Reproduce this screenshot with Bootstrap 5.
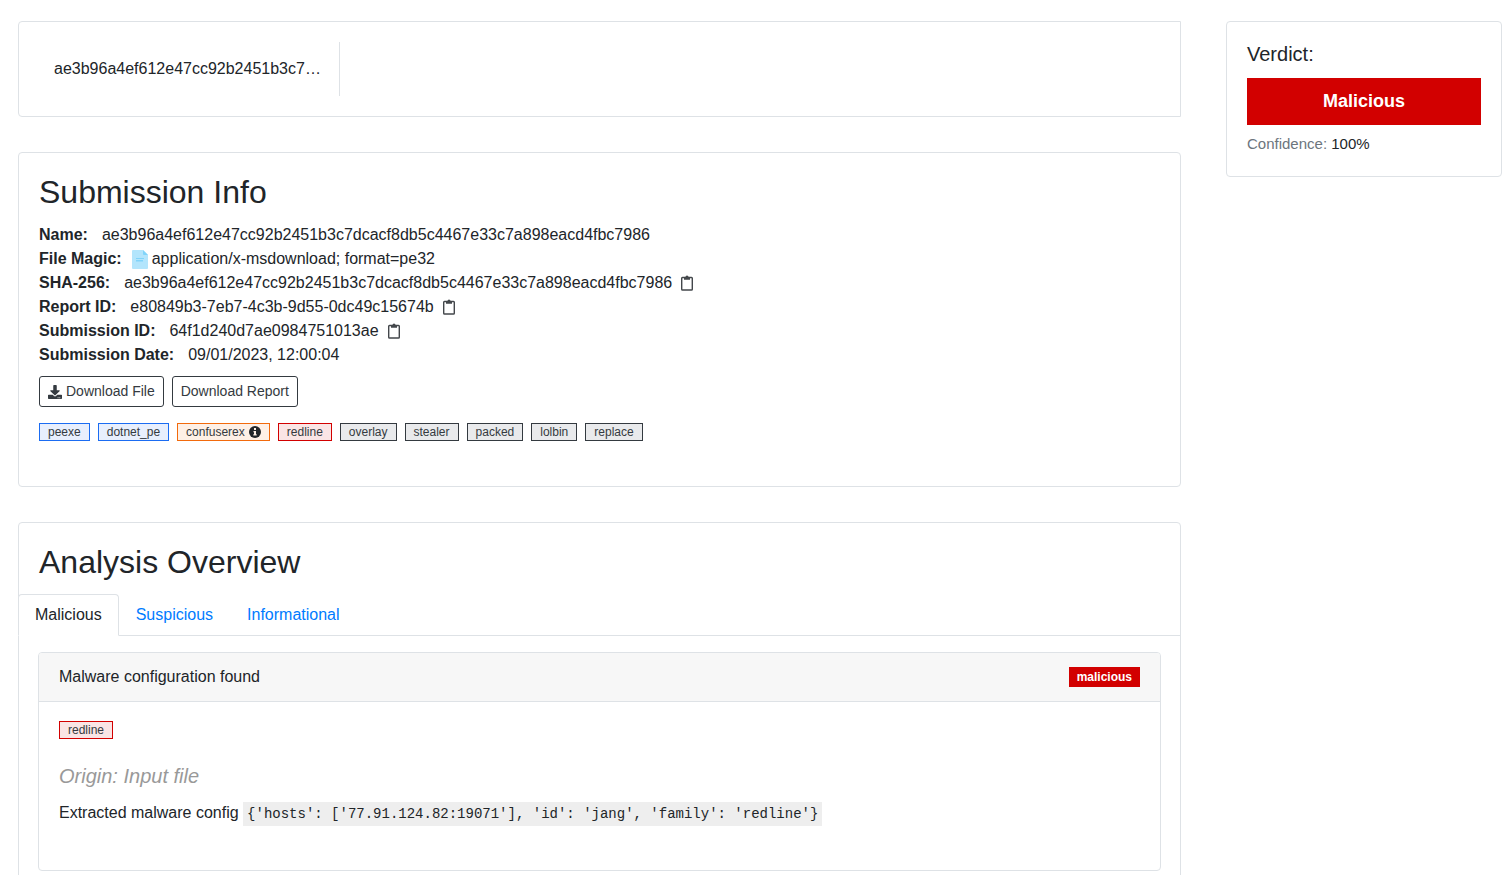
<!DOCTYPE html>
<html lang="en">
<head>
<meta charset="utf-8">
<meta name="viewport" content="width=device-width, initial-scale=1">
<title>Submission report</title>
<link href="https://cdn.jsdelivr.net/npm/bootstrap@5.3.0/dist/css/bootstrap.min.css" rel="stylesheet">
<style>
  body { font-family: "Liberation Sans", Arial, sans-serif; color: #212529; background: #fff; }
  .report-layout { display: grid; gap: 45px; padding: 21px 6px 20px 18px; }
  @media (min-width: 992px) {
    .report-layout { grid-template-columns: minmax(0, 1fr) 276px; align-items: start; }
  }
  .report-main { display: grid; gap: 35px; min-width: 0; }
  .card { --bs-card-border-color: #dee2e6; --bs-card-border-radius: 4px; --bs-card-inner-border-radius: 3px;
    --bs-card-spacer-x: 20px; --bs-card-spacer-y: 20px; --bs-card-cap-padding-x: 20px; --bs-card-cap-padding-y: 12px;
    --bs-card-cap-bg: #f7f7f7; --bs-card-color: #212529; }
  .file-strip { border-radius: 4px 0 0 4px; }
  .file-name { width: 301px; padding: 15px 18px 15px 15px; border-right: 1px solid #dee2e6; }
  h2 { font-size: 32px; line-height: 38px; font-weight: 400; margin-bottom: 12px; }
  .verdict-title { font-size: 20px; line-height: 24px; margin-bottom: 12px; }
  .verdict-box { background: #d20000; color: #fff; font-size: 18px; line-height: 27px; padding: 10px; font-weight: 700; text-align: center; }
  .confidence { font-size: 15px; line-height: 22px; margin: 8px 0 0; padding-bottom: 1px; }
  .confidence span { color: #6c757d; }
  .facts dt, .facts dd { margin: 0; line-height: 24px; }
  .facts dd { overflow-wrap: anywhere; min-width: 0; }
  .fact-gap { gap: 14px; }
  .magic-row { gap: 10px; }
  .copy-btn { border: 0; background: none; padding: 0; margin-left: 9px; line-height: 1; vertical-align: -3px; }
  .copy-btn svg, .file-icon { display: block; }
  .btn-outline-dark { --bs-btn-color: #343a40; --bs-btn-border-color: #343a40; --bs-btn-padding-x: 8px; --bs-btn-padding-y: 4px;
    --bs-btn-font-size: 14px; --bs-btn-line-height: 21px; --bs-btn-border-radius: 3px; }
  .actions { margin-top: 9px; }
  .tag-list { margin: 16px 0 45px; }
  .tag { display: inline-flex; align-items: center; gap: 4px; height: 18px; padding: 0 8px; border: 1px solid #343a40;
    background: #e9eaec; color: #343a40; font-size: 12px; line-height: 16px; }
  .tag-blue { border-color: #1b6cf2; background: #e8effd; }
  .tag-orange { border-color: #f26a0c; background: #fef0e6; }
  .tag-red { border-color: #d20000; background: #fae5e5; }
  .overview-head { padding-bottom: 1px; }
  .nav-tabs { --bs-nav-tabs-border-color: #dee2e6; --bs-nav-tabs-border-radius: 4px; --bs-nav-tabs-link-active-color: #212529;
    --bs-nav-link-color: #007bff; --bs-nav-link-padding-x: 16px; margin-left: -1px; }
  .overview-panes { padding: 16px 19px 19px; }
  .finding .card-body { padding-top: 19px; }
  .severity { background: #d20000; color: #fff; font-size: 12px; line-height: 20px; font-weight: 700; padding: 0 8px; }
  .origin { font-size: 20px; line-height: 24px; font-style: italic; font-weight: 400; color: #999; margin: 25px 0 13px; }
  .config { font-family: "Liberation Mono", monospace; font-size: 14px; line-height: 24px; color: #212529; background: #eee; padding: 4px; }
</style>
</head>
<body>
<svg width="0" height="0" class="position-absolute" aria-hidden="true">
  <symbol id="clipboard" viewBox="0 0 12 16">
    <path d="M1.500 2.500h9a.8.8 0 0 1 .8.8v10.900a.8.8 0 0 1-.8.8h-9a.8.8 0 0 1-.8-.8V3.300a.8.8 0 0 1 .8-.8z" fill="none" stroke="#43474b" stroke-width="1.4"/>
    <path d="M3 2h1.500a1.500 1.500 0 0 1 3 0H9v2.800H3z" fill="#43474b"/>
  </symbol>
</svg>
<div class="report-layout">
  <main class="report-main">
    <section class="card file-strip">
      <div class="card-body"><div class="file-name text-truncate">ae3b96a4ef612e47cc92b2451b3c7dcacf8db5c4467e33c7a898eacd4fbc7986</div></div>
    </section>

    <section class="card">
      <div class="card-body pb-0">
        <h2>Submission Info</h2>
        <dl class="facts mb-0">
          <div class="d-flex fact-gap"><dt>Name:</dt><dd>ae3b96a4ef612e47cc92b2451b3c7dcacf8db5c4467e33c7a898eacd4fbc7986</dd></div>
          <div class="d-flex magic-row"><dt>File Magic:</dt><dd class="d-flex align-items-center gap-1">
            <svg class="file-icon" width="16" height="20" viewBox="0 0 16 20" aria-hidden="true"><path d="M1 1h10l5 5v13a1 1 0 0 1-1 1H1a1 1 0 0 1-1-1V2a1 1 0 0 1 1-1z" fill="#b3e5fc"/><path d="M11 1l5 5h-4a1 1 0 0 1-1-1z" fill="#81d4fa"/><path d="M4 9h8v1H4zM4 11h7v1.500H4z" fill="#81d4fa"/></svg>
            <span>application/x-msdownload; format=pe32</span></dd></div>
          <div class="d-flex fact-gap"><dt>SHA-256:</dt><dd>ae3b96a4ef612e47cc92b2451b3c7dcacf8db5c4467e33c7a898eacd4fbc7986<button type="button" class="copy-btn" aria-label="Copy SHA-256"><svg width="12" height="16"><use href="#clipboard"/></svg></button></dd></div>
          <div class="d-flex fact-gap"><dt>Report ID:</dt><dd>e80849b3-7eb7-4c3b-9d55-0dc49c15674b<button type="button" class="copy-btn" aria-label="Copy report ID"><svg width="12" height="16"><use href="#clipboard"/></svg></button></dd></div>
          <div class="d-flex fact-gap"><dt>Submission ID:</dt><dd>64f1d240d7ae0984751013ae<button type="button" class="copy-btn" aria-label="Copy submission ID"><svg width="12" height="16"><use href="#clipboard"/></svg></button></dd></div>
          <div class="d-flex fact-gap"><dt>Submission Date:</dt><dd>09/01/2023, 12:00:04</dd></div>
        </dl>
        <div class="d-flex flex-wrap gap-2 actions">
          <button type="button" class="btn btn-outline-dark d-inline-flex align-items-center gap-1"><svg width="14" height="14" viewBox="0 0 512 512" fill="currentColor" aria-hidden="true"><path d="M216 0h80c13.300 0 24 10.700 24 24v168h87.700c17.800 0 26.700 21.500 14.100 34.100L269.700 378.300c-7.500 7.500-19.800 7.500-27.300 0L90.100 226.100c-12.600-12.600-3.700-34.100 14.100-34.100H192V24c0-13.300 10.700-24 24-24zm296 376v112c0 13.300-10.700 24-24 24H24c-13.300 0-24-10.700-24-24V376c0-13.300 10.700-24 24-24h146.700l49 49c20.100 20.100 52.500 20.100 72.600 0l49-49H488c13.300 0 24 10.700 24 24zm-124 88c0-11-9-20-20-20s-20 9-20 20 9 20 20 20 20-9 20-20zm64 0c0-11-9-20-20-20s-20 9-20 20 9 20 20 20 20-9 20-20z"/></svg>Download File</button>
          <button type="button" class="btn btn-outline-dark">Download Report</button>
        </div>
        <div class="d-flex flex-wrap gap-2 tag-list">
          <span class="tag tag-blue">peexe</span><span class="tag tag-blue">dotnet_pe</span>
          <span class="tag tag-orange">confuserex<svg width="12" height="12" viewBox="0 0 12 12" aria-hidden="true"><circle cx="6" cy="6" r="6" fill="#212529"/><path d="M5 2h2v2H5zM4.500 5H7v3.200h.7v1.300H4.300V8.200H5V6.200h-.5z" fill="#fef0e6"/></svg></span>
          <span class="tag tag-red">redline</span><span class="tag">overlay</span><span class="tag">stealer</span><span class="tag">packed</span><span class="tag">lolbin</span><span class="tag">replace</span>
        </div>
      </div>
    </section>

    <section class="card">
      <div class="card-body overview-head"><h2>Analysis Overview</h2></div>
      <ul class="nav nav-tabs" role="tablist">
        <li class="nav-item" role="presentation"><a class="nav-link active" href="#malicious" data-bs-toggle="tab" role="tab">Malicious</a></li>
        <li class="nav-item" role="presentation"><a class="nav-link" href="#suspicious" data-bs-toggle="tab" role="tab">Suspicious</a></li>
        <li class="nav-item" role="presentation"><a class="nav-link" href="#informational" data-bs-toggle="tab" role="tab">Informational</a></li>
      </ul>
      <div class="tab-content overview-panes">
        <div class="tab-pane active" id="malicious" role="tabpanel">
          <article class="card finding">
            <div class="card-header d-flex justify-content-between align-items-center">Malware configuration found<span class="severity">malicious</span></div>
            <div class="card-body">
              <div class="d-flex"><span class="tag tag-red">redline</span></div>
              <h5 class="origin">Origin: Input file</h5>
              <p class="mb-4">Extracted malware config <code class="config">{'hosts': ['77.91.124.82:19071'], 'id': 'jang', 'family': 'redline'}</code></p>
            </div>
          </article>
        </div>
        <div class="tab-pane" id="suspicious" role="tabpanel"></div>
        <div class="tab-pane" id="informational" role="tabpanel"></div>
      </div>
    </section>
  </main>

  <aside class="card">
    <div class="card-body">
      <h5 class="verdict-title fw-normal">Verdict:</h5>
      <div class="verdict-box">Malicious</div>
      <p class="confidence"><span>Confidence:</span> 100%</p>
    </div>
  </aside>
</div>
<script src="https://cdn.jsdelivr.net/npm/bootstrap@5.3.0/dist/js/bootstrap.bundle.min.js"></script>
</body>
</html>
